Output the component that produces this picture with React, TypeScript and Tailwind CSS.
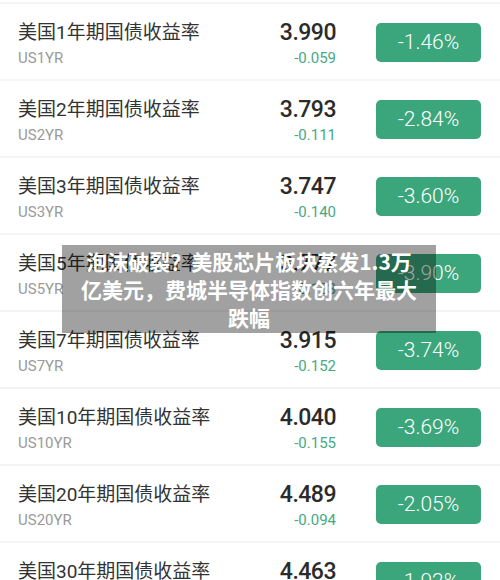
import React from 'react';

interface BondRow {
  name: string;
  code: string;
  value: string;
  change: string;
  pct: string;
}

const rows: BondRow[] = [
  { name: '美国1年期国债收益率', code: 'US1YR', value: '3.990', change: '-0.059', pct: '-1.46%' },
  { name: '美国2年期国债收益率', code: 'US2YR', value: '3.793', change: '-0.111', pct: '-2.84%' },
  { name: '美国3年期国债收益率', code: 'US3YR', value: '3.747', change: '-0.140', pct: '-3.60%' },
  { name: '美国5年期国债收益率', code: 'US5YR', value: '3.777', change: '-0.153', pct: '-3.90%' },
  { name: '美国7年期国债收益率', code: 'US7YR', value: '3.915', change: '-0.152', pct: '-3.74%' },
  { name: '美国10年期国债收益率', code: 'US10YR', value: '4.040', change: '-0.155', pct: '-3.69%' },
  { name: '美国20年期国债收益率', code: 'US20YR', value: '4.489', change: '-0.094', pct: '-2.05%' },
  { name: '美国30年期国债收益率', code: 'US30YR', value: '4.463', change: '-0.087', pct: '-1.92%' },
];

const font = { fontFamily: 'Roboto, "Noto Sans CJK SC", sans-serif' };

const Row = ({ name, code, value, change, pct }: BondRow) => {
  return (
    <div className="border-t-2 border-[#f4f4f4] h-[77px] flex items-start pl-[18px] pr-[19px]">
      <div className="flex-1 pt-[17px]">
        <p className="text-[19px] leading-[24px] text-[#333333]">{name}</p>
        <p className="text-[15px] leading-[18px] mt-[4px] text-[#9a9a9a]">{code}</p>
      </div>
      <div className="pt-[17px] text-right">
        <p className="text-[23px] leading-[24px] font-medium tracking-[-0.5px] text-[#2b2b2b]">{value}</p>
        <p className="text-[15px] leading-[18px] mt-[4px] text-[#46a983]">{change}</p>
      </div>
      <div className="ml-[40px] mt-[19px] w-[105px] h-[39px] rounded-[5px] bg-[#3ba67c] flex items-center justify-center">
        <span className="text-[21px] font-light text-white">{pct}</span>
      </div>
    </div>
  );
};

export default function App() {
  return (
    <div className="relative w-[500px] h-[580px] overflow-hidden bg-white pt-[2px]" style={font}>
      {rows.map((r) => (
        <Row key={r.code} {...r} />
      ))}
      <div className="absolute left-[62px] top-[245px] w-[374px] h-[88px] bg-black/[0.37] px-[17px] pt-[2px] text-center">
        <p
          className="text-[21px] leading-[28px] font-bold text-white"
          style={{ fontFamily: '"Noto Sans CJK SC", sans-serif' }}
        >
          泡沫破裂？美股芯片板块蒸发1.3万亿美元，费城半导体指数创六年最大跌幅
        </p>
      </div>
    </div>
  );
}
